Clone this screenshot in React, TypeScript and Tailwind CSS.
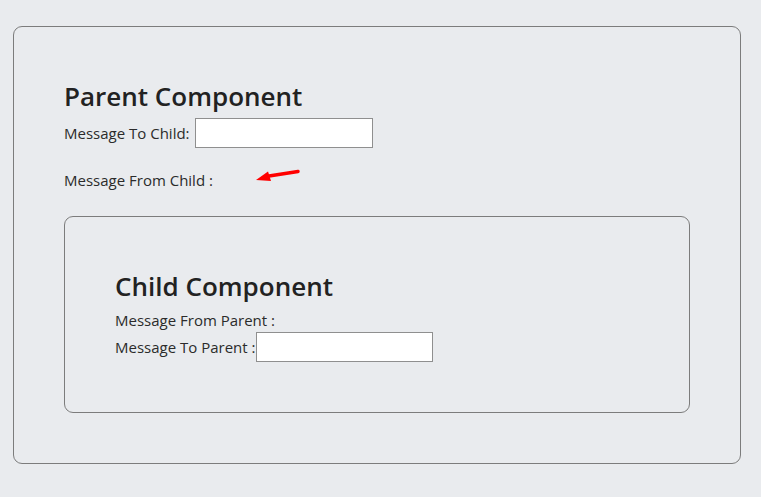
import React from 'react';

const RedArrow: React.FC = () => (
  <svg width="46" height="16" viewBox="0 0 46 16" className="ml-[42px] -mt-[6px]">
    <path d="M43 2.5 L14 7" stroke="#f00" strokeWidth="3.5" strokeLinecap="round" fill="none" />
    <path d="M1 11 L13 2.5 L16 12 Z" fill="#f00" />
  </svg>
);

const ChildComponent: React.FC = () => (
  <div className="mt-[26px] w-[626px] h-[197px] border border-[#7c7c7c] rounded-[9px] pl-[50px] pt-[53px]">
    <h2 className="h-[32px] leading-[32px] text-[26px] font-semibold text-[#222]">Child Component</h2>
    <p className="mt-[8px] h-[20px] leading-[20px]">Message From Parent :</p>
    <div className="mt-[2px] flex items-center h-[30px]">
      <span>Message To Parent :</span>
      <input className="w-[177px] h-[30px] bg-white border border-[#8f8f8f] outline-none" />
    </div>
  </div>
);

export default function App() {
  return (
    <div
      className="min-h-screen bg-[#e9ebee] pt-[26px] pl-[13px] text-[15px] text-[#2b2b2b]"
      style={{ fontFamily: '"Open Sans", "Noto Sans", sans-serif' }}
    >
      <div className="w-[728px] h-[438px] border border-[#7c7c7c] rounded-[9px] pl-[50px] pt-[53px]">
        <h2 className="h-[32px] leading-[32px] text-[26px] font-semibold text-[#222]">Parent Component</h2>
        <div className="mt-[6px] flex items-center h-[30px]">
          <span>Message To Child:</span>
          <input className="ml-[5px] w-[178px] h-[30px] bg-white border border-[#8f8f8f] outline-none" />
        </div>
        <div className="mt-[22px] flex items-center h-[20px]">
          <span>Message From Child :</span>
          <RedArrow />
        </div>
        <ChildComponent />
      </div>
    </div>
  );
}
